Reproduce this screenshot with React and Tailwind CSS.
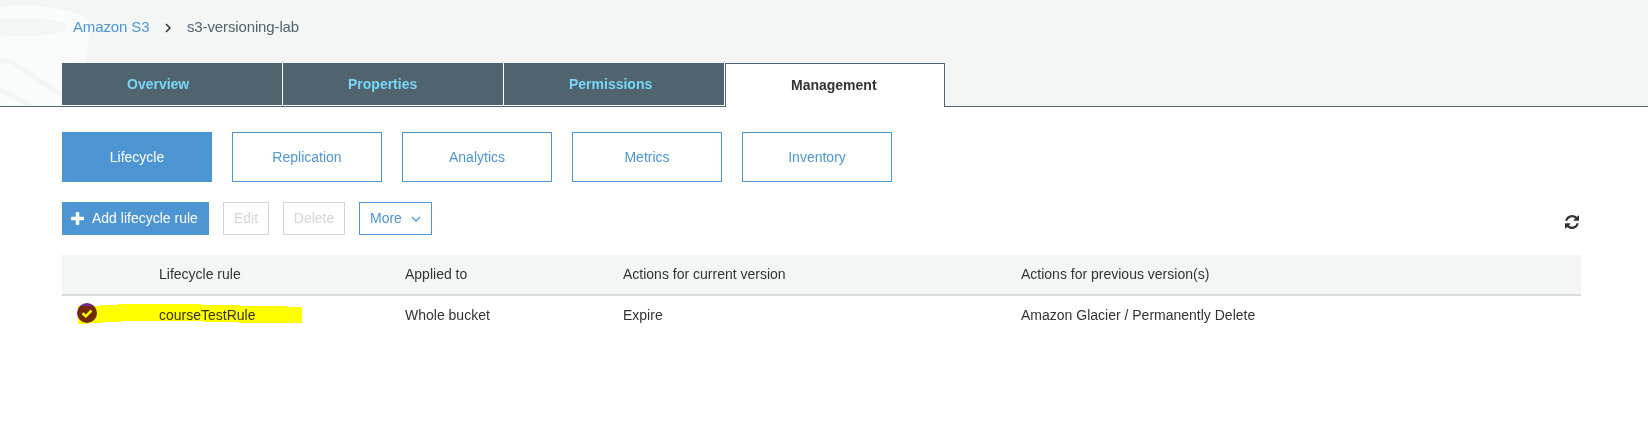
const primaryTabs = [
  { label: "Overview" },
  { label: "Properties" },
  { label: "Permissions" },
];

const sections = ["Lifecycle", "Replication", "Analytics", "Metrics", "Inventory"];

function BucketArt() {
  return (
    <svg className="absolute left-0 top-0" width="100" height="106" viewBox="0 0 100 106" fill="none">
      <path d="M0 7C10 6 20 5.500 30 6C62 7 90 14 90 26L85 63V106H0Z" fill="#fafcfb" />
      <path d="M0 19C8 18 18 17.500 28 18C50 18.500 67 22 67 27C67 32 50 36 28 36C18 36 8 36 0 35Z" fill="#f4f6f6" />
      <path d="M-2 62C5 60 9 60 14 63L66 98" stroke="#f4f6f6" strokeWidth="5" />
      <path d="M-2 88L32 107" stroke="#f4f6f6" strokeWidth="5" />
    </svg>
  );
}

function PlusIcon() {
  return (
    <svg width="13" height="13" viewBox="0 0 1408 1408" fill="currentColor">
      <path d="M1408 608v192q0 40-28 68t-68 28h-416v416q0 40-28 68t-68 28h-192q-40 0-68-28t-28-68v-416h-416q-40 0-68-28t-28-68v-192q0-40 28-68t68-28h416v-416q0-40 28-68t68-28h192q40 0 68 28t28 68v416h416q40 0 68 28t28 68z" />
    </svg>
  );
}

function RefreshIcon() {
  return (
    <svg width="14" height="14" viewBox="0 0 1536 1536" fill="currentColor">
      <path d="M1511 928q0 5-1 7-64 268-268 434.500t-478 166.500q-146 0-282.500-55t-243.500-157l-129 129q-19 19-45 19t-45-19-19-45v-448q0-26 19-45t45-19h448q26 0 45 19t19 45-19 45l-137 137q71 66 161 102t187 36q134 0 250-65t186-179q11-17 53-117 8-23 30-23h192q13 0 22.500 9.500t9.500 22.500zm25-800v448q0 26-19 45t-45 19h-448q-26 0-45-19t-19-45 19-45l138-138q-148-137-349-137-134 0-250 65t-186 179q-11 17-53 117-8 23-30 23h-199q-13 0-22.500-9.500t-9.500-22.500v-7q65-268 270-434.500t480-166.500q146 0 284 55.500t245 156.500l130-129q19-19 45-19t45 19 19 45z" />
    </svg>
  );
}

export default function App() {
  return (
    <div className="h-[434px] w-full overflow-hidden bg-white font-['Liberation_Sans',Arial,sans-serif] text-[14px] leading-5 text-[#333]">
      <header className="relative flex h-[107px] flex-col justify-between border-b border-[#506470] bg-[#f4f6f6]">
        <BucketArt />
        <nav className="relative flex items-center pl-[73px] pt-[17px] text-[15px] tracking-[-0.13px]">
          <a className="w-[77px] whitespace-nowrap text-[#4e95d4]">Amazon S3</a>
          <svg className="ml-[15px] mt-px" width="7" height="10" viewBox="0 0 7 10" fill="none">
            <path d="M1 1L5 5L1 9" stroke="#333" strokeWidth="1.5" />
          </svg>
          <span className="ml-[15px] text-[#506470]">s3-versioning-lab</span>
        </nav>
        <div className="relative -mb-px flex h-11 pl-[62px] font-bold">
          {primaryTabs.map((tab) => (
            <div key={tab.label} className="mb-px h-[43px] w-[221px] border-b border-r border-white bg-[#506470] pl-[65px] pt-[11px] text-[#78d6f6]">
              {tab.label}
            </div>
          ))}
          <div className="h-11 w-[220px] border-x border-t border-[#506470] bg-white pl-[65px] pt-[11px]">Management</div>
        </div>
      </header>

      <main className="pl-[62px] pt-[25px]">
        <div className="flex gap-5">
          {sections.map((name, i) => (
            <button
              key={name}
              className={
                i === 0
                  ? "h-[50px] w-[150px] border border-[#4e95d4] bg-[#4e95d4] text-white"
                  : "h-[50px] w-[150px] border border-[#4e95d4] text-[#4e95d4]"
              }
            >
              {name}
            </button>
          ))}
        </div>

        <div className="mt-5 flex h-[33px] w-[1519px] items-stretch">
          <button className="flex w-[147px] items-center bg-[#4e95d4] pb-px pl-[9px] text-white">
            <PlusIcon />
            <span className="ml-2 whitespace-nowrap">Add lifecycle rule</span>
          </button>
          <button className="ml-[14px] w-[46px] border border-[#d5d5d5] pb-0.5 text-[#d5d5d5]">Edit</button>
          <button className="ml-[14px] w-[62px] border border-[#d5d5d5] pb-0.5 text-[#d5d5d5]">Delete</button>
          <button className="ml-[14px] flex w-[73px] items-center border border-[#4e95d4] pb-px pl-[10px] text-[#4e95d4]">
            More
            <svg className="ml-[9px] mt-px" width="10" height="6" viewBox="0 0 10 6" fill="none">
              <path d="M1 1L5 5L9 1" stroke="currentColor" strokeWidth="1.3" />
            </svg>
          </button>
          <div className="ml-auto mr-0.5 mt-[13px]">
            <RefreshIcon />
          </div>
        </div>

        <div className="relative mt-5 w-[1519px]">
          <div className="grid h-[41px] grid-cols-[97px_246px_218px_398px_1fr] border-b-2 border-[#dadbdb] bg-[#f4f6f6] pt-[9px]">
            <span />
            <span>Lifecycle rule</span>
            <span>Applied to</span>
            <span>Actions for current version</span>
            <span>Actions for previous version(s)</span>
          </div>
          <div className="grid h-10 grid-cols-[97px_246px_218px_398px_1fr] pt-[9px]">
            <span className="-mt-[2px] pl-[15px]">
              <svg width="20" height="20" viewBox="0 0 20 20" fill="none">
                <circle cx="10" cy="10" r="10" fill="#702a8c" />
                <path d="M5.500 10.200L8.800 13.300L14.500 7.500" stroke="white" strokeWidth="2.600" />
              </svg>
            </span>
            <span>courseTestRule</span>
            <span>Whole bucket</span>
            <span>Expire</span>
            <span>Amazon Glacier / Permanently Delete</span>
          </div>
          <svg className="absolute left-[15px] top-[48px] mix-blend-multiply" width="226" height="22" viewBox="77 303 226 22">
            <path
              d="M78 306H101V305H118V304H201V305H240V306H287V307H302V323H239V322H204V321H121V322H102V323H88V324H78Z"
              fill="#ffff00"
            />
          </svg>
        </div>
      </main>
    </div>
  );
}
